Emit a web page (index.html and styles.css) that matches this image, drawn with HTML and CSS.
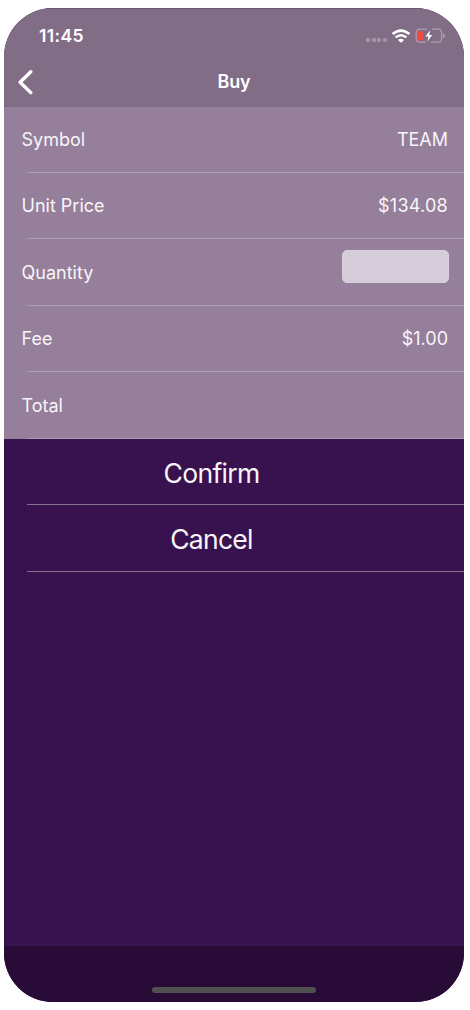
FILE: index.html
```html
<!DOCTYPE html>
<html lang="en">
<head>
<meta charset="utf-8">
<title>Buy</title>
<link rel="stylesheet" href="styles.css">
</head>
<body>
<main class="phone">
  <header class="header">
    <div class="status">
      <span class="time">11:45</span>
      <div class="indicators">
        <span class="signal"><i></i><i></i><i></i><i></i></span>
        <svg class="wifi" width="20" height="14" viewBox="0 0 20 14" fill="none" stroke="#fff">
          <path d="M1.6 5.1Q10 -2 18.4 5.1" stroke-width="2.6"/>
          <path d="M4.6 8.4Q10 3.9 15.4 8.4" stroke-width="2.4"/>
          <path d="M7 10.9Q10 8.5 13 10.9L10 13.7Z" fill="#fff" stroke="none"/>
        </svg>
        <svg class="battery" width="31" height="16" viewBox="0 0 31 16" fill="none">
          <path d="M12 1.2H5Q1.2 1.2 1.2 5V11Q1.2 14.2 5 14.2H11M17 1.2H23Q26.6 1.2 26.6 5V11Q26.6 14.2 23 14.2H15.5" stroke="#ad9fb2" stroke-width="1.2"/>
          <path d="M28 5.2Q30 5.8 30 7.7T28 10.2Z" fill="#ad9fb2"/>
          <rect x="2.8" y="3" width="5" height="9.6" rx="1.2" fill="#f44a3b"/>
          <path d="M15.2 2.3L10.4 8.5H13.4L12.4 13.5L17.2 7H14.2Z" fill="#fff"/>
        </svg>
      </div>
    </div>
    <nav class="nav">
      <svg class="back" width="16" height="26" viewBox="0 0 16 26" fill="none" stroke="#fff" stroke-width="3.4" stroke-linecap="round" stroke-linejoin="round"><path d="M13.8 2.8L3.1 13.2L13.8 23.6"/></svg>
      <h1 class="title">Buy</h1>
    </nav>
  </header>
  <section class="details">
    <div class="row"><span>Symbol</span><span class="ticker">TEAM</span></div>
    <div class="row"><span>Unit Price</span><span class="price">$134.08</span></div>
    <div class="row"><span>Quantity</span><input class="quantity" type="text" aria-label="Quantity"></div>
    <div class="row"><span>Fee</span><span>$1.00</span></div>
    <div class="row"><span>Total</span></div>
  </section>
  <section class="actions">
    <button class="action">Confirm</button>
    <button class="action">Cancel</button>
  </section>
  <footer class="footer"><span class="home"></span></footer>
</main>
</body>
</html>
```
FILE: styles.css
```css
* { box-sizing: border-box; }
body { margin: 0; padding: 8px 0 0 4px; background: #fff; font-family: Inter, "Liberation Sans", sans-serif; color: #fff; }
.phone { width: 460px; height: 994px; border-radius: 49px; overflow: hidden; background: #38124f; display: flex; flex-direction: column; }
.header { height: 99px; background: #826d87; box-shadow: inset 0 -1px #7c6881, inset 0 1px #69576f; flex: none; }
.status { height: 50px; padding: 5px 18px 0 35px; display: flex; justify-content: space-between; align-items: center; }
.time { font-size: 17.5px; font-weight: 600; letter-spacing: .35px; }
.indicators { display: flex; align-items: center; padding-top: 1px; }
.signal { display: flex; gap: 1.6px; margin: 8px 4px 0 0; }
.signal i { width: 4px; height: 4px; border-radius: 1.2px; background: #a293a7; }
.wifi { margin-right: 4px; }
.nav { height: 47px; display: grid; grid-template-columns: 40px 1fr 40px; align-items: center; }
.back { margin-left: 13px; }
.title { margin: 0; text-align: center; font-size: 18px; font-weight: 600; letter-spacing: -.1px; }
.details { background: #957f9a; flex: none; font-size: 18px; color: #f8f5f9; }
.row { height: 66.5px; padding: 0 16px 0 17.5px; display: flex; justify-content: space-between; align-items: center; background: linear-gradient(#ad9cb0, #ad9cb0) 23px 100% / 100% 1px no-repeat; }
.row:first-child { height: 65.5px; }
.price { letter-spacing: .25px; }
.quantity { width: 107px; height: 33px; margin: 0 -1px 11px 0; border: 1px solid #d9d2dd; border-radius: 5px; background: #d4ccd8; outline: 0; }
.actions { display: flex; flex-direction: column; }
.action { height: 66.5px; border: 0; padding: 2px 45px 0 0; font: 400 26.5px Inter, "Liberation Sans", sans-serif; letter-spacing: -.7px; color: #f8f5f9; background: linear-gradient(#827188, #827188) 23px 100% / 100% 1px no-repeat; }
.footer { margin-top: auto; height: 56px; background: #280c37; display: flex; justify-content: center; align-items: flex-end; padding-bottom: 9px; }
.home { width: 164px; height: 6px; border-radius: 3px; background: #505050; }
```
